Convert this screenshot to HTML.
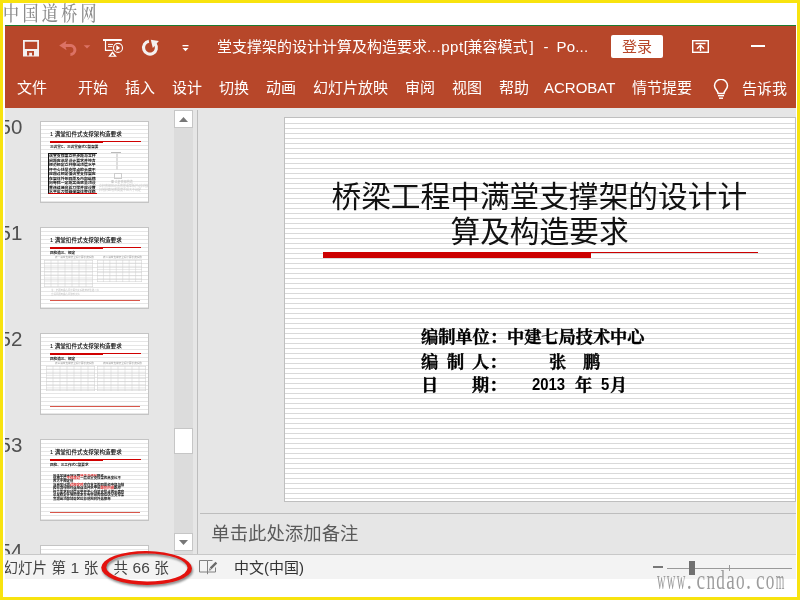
<!DOCTYPE html>
<html lang="zh-CN">
<head>
<meta charset="utf-8">
<title>桥梁工程中满堂支撑架的设计计算及构造要求</title>
<style>
html,body{margin:0;padding:0;}
body{width:800px;height:600px;overflow:hidden;background:#f8e30f;position:relative;
  font-family:"Liberation Sans","Noto Sans CJK SC",sans-serif;}
.abs{position:absolute;}
#white{left:3px;top:3px;width:794px;height:594px;background:#fff;}
#win{left:5px;top:25px;width:791px;height:554px;background:#e6e6e6;overflow:hidden;will-change:transform;}
#green{left:0;top:0;width:791px;height:1px;background:#1d7a2f;}
#red{left:0;top:1px;width:791px;height:82px;background:#b7472a;}
.t{position:absolute;white-space:nowrap;line-height:1;}
.tab{position:absolute;top:53px;font-size:15px;color:#fff;white-space:nowrap;line-height:20px;height:20px;}
#title{left:212px;top:12px;font-size:15px;line-height:20px;color:#fff;}
.tl{top:12px;font-size:15px;line-height:20px;color:#fff;}
#login{left:606px;top:10px;width:52px;height:23px;background:#fff;border-radius:2px;color:#b7472a;font-size:15px;line-height:23px;text-align:center;}
/* thumbnails */
.num{position:absolute;left:-5.500px;font-size:20.500px;color:#505050;line-height:20px;font-family:"Liberation Sans",sans-serif;font-weight:300;}
.th{position:absolute;left:35px;width:107px;height:80px;border:1px solid #c4c4c4;background:#fff;overflow:hidden;
  background-image:repeating-linear-gradient(to bottom,#fff 0,#fff 3px,#e6e6e6 3px,#e6e6e6 4px);}
.th .tt{position:absolute;left:9px;top:9px;font-size:5.6px;line-height:7px;color:#000;font-weight:500;white-space:nowrap;}
.th .rl{position:absolute;left:9px;top:19px;width:91px;height:1px;background:#d00000;}
.th .rl2{position:absolute;left:9px;top:19px;width:53px;height:1.800px;background:#d00000;}
.th .st{position:absolute;left:9px;top:23px;font-size:3.6px;line-height:5px;color:#222;font-weight:bold;white-space:nowrap;}
.th .bl{position:absolute;left:9px;top:72px;width:90px;height:1px;background:#d8564a;}
.sub{position:absolute;white-space:nowrap;font-family:"Liberation Serif","Noto Serif CJK SC",serif;font-weight:700;font-size:17.200px;line-height:20px;color:#000;-webkit-text-stroke:0.350px #000;}
.sub.lat{font-family:"Liberation Sans",sans-serif;font-weight:bold;font-size:16.200px;-webkit-text-stroke:0;transform:scaleX(0.920);transform-origin:0 0;margin-top:-1.700px;}
.sb{font-size:14.500px;line-height:20px;color:#444;word-spacing:0.500px}
.dg{font-size:15.500px;}
.tb{border:0.500px solid #ccc;box-sizing:border-box;background-image:repeating-linear-gradient(to bottom,transparent 0,transparent 2.500px,#d8d8d8 2.500px,#d8d8d8 3px),repeating-linear-gradient(to right,transparent 0,transparent 6.500px,#d8d8d8 6.500px,#d8d8d8 7px);}
</style>
</head>
<body>
<div id="white" class="abs"></div>
<div id="wm1" class="t" style="left:3px;top:3.500px;font-family:'Liberation Serif','Noto Serif CJK SC',serif;font-weight:500;font-size:16px;line-height:22px;color:#8c8c8c;letter-spacing:3.400px;transform:scaleY(1.300);transform-origin:0 60%;will-change:transform;">中国道桥网</div>

<div id="win" class="abs">
  <div id="green" class="abs"></div>
  <div id="red" class="abs"></div>

  <!-- quick access toolbar -->
  <svg class="abs" style="left:18px;top:14.500px" width="16" height="17" viewBox="0 0 16 17">
    <path d="M0 0H16V16.500H0Z M1.800 1.800V9H14.200V1.800Z" fill="#f4f1f0" fill-rule="evenodd"/>
    <path d="M4 11H11V15.400H9V12.800H6.200V15.400H4Z" fill="#b7472a"/>
  </svg>
  <svg class="abs" style="left:54px;top:15px" width="32" height="17" viewBox="0 0 32 17">
    <path d="M0.200 5.500 L7.600 0.800 L6.600 4 H12 V7 H6.600 L7.600 10.200Z" fill="#dc7265"/>
    <path d="M11.500 5.500 H12 A4.500 4.500 0 0 1 11.400 14.460" fill="none" stroke="#dc7265" stroke-width="3"/>
    <path d="M24.700 5.300 H31.300 L28 8.500Z" fill="#dc7265"/>
  </svg>
  <svg class="abs" style="left:98px;top:14px" width="21" height="19" viewBox="0 0 21 19">
    <rect x="0" y="0" width="18.800" height="2" fill="#fff"/>
    <path d="M2.500 2 V11.400 H9.500" fill="none" stroke="#fff" stroke-width="1.200"/>
    <rect x="5" y="4.900" width="5" height="1" fill="#fff"/>
    <rect x="5" y="7.100" width="4.400" height="1" fill="#fff"/>
    <circle cx="15" cy="8.900" r="4.500" fill="#b7472a" stroke="#fff" stroke-width="1.100"/>
    <path d="M13.300 6 L17.100 8.900 L13.300 11.800Z" fill="#fff"/>
    <path d="M9.500 12.200 L5.200 17.800 H13.900Z M9.500 14.600 L7.900 16.700 H11.200Z" fill="#fff" fill-rule="evenodd"/>
  </svg>
  <svg class="abs" style="left:136px;top:14.300px" width="19" height="18" viewBox="0 0 19 18">
    <path d="M7.900 2.240 A6.450 6.450 0 1 0 14.200 4.800" fill="none" stroke="#f4f1f0" stroke-width="3.100"/>
    <path d="M9.800 0.800 L17.900 2 L11.800 9Z" fill="#f4f1f0"/>
  </svg>
  <svg class="abs" style="left:177px;top:19.600px" width="7" height="7" viewBox="0 0 7 7">
    <rect x="0.500" y="0" width="6" height="1.300" fill="#fff"/>
    <path d="M0.500 3 H6.500 L3.500 6.300Z" fill="#fff"/>
  </svg>

  <div id="title" class="t">堂支撑架的设计计算及构造要求</div>
  <div class="t tl" style="left:422px;letter-spacing:0.550px">...ppt[</div>
  <div class="t tl" style="left:462.500px">兼容模式</div>
  <div class="t tl" style="left:524.500px">]</div>
  <div class="t tl" style="left:538.500px">-</div>
  <div class="t tl" style="left:551.500px;letter-spacing:0.200px">Po...</div>
  <div id="login" class="abs">登录</div>
  <svg class="abs" style="left:687px;top:14.500px" width="17" height="13" viewBox="0 0 17 13">
    <rect x="0.700" y="0.700" width="15.600" height="11.600" fill="none" stroke="#fff" stroke-width="1.400"/>
    <rect x="3.500" y="2.800" width="10" height="1.400" fill="#fff"/>
    <path d="M8.500 5.500 V11 M5 8.800 L8.500 5.300 L12 8.800" fill="none" stroke="#fff" stroke-width="1.400"/>
  </svg>
  <div class="abs" style="left:746px;top:20.400px;width:13.500px;height:1.500px;background:#fff"></div>

  <!-- ribbon tabs -->
  <div class="tab" style="left:12px">文件</div>
  <div class="tab" style="left:73px">开始</div>
  <div class="tab" style="left:120px">插入</div>
  <div class="tab" style="left:167px">设计</div>
  <div class="tab" style="left:214px">切换</div>
  <div class="tab" style="left:261px">动画</div>
  <div class="tab" style="left:308px">幻灯片放映</div>
  <div class="tab" style="left:400px">审阅</div>
  <div class="tab" style="left:447px">视图</div>
  <div class="tab" style="left:494px">帮助</div>
  <div class="tab" style="left:539px">ACROBAT</div>
  <div class="tab" style="left:627px">情节提要</div>
  <svg class="abs" style="left:707.500px;top:54px" width="16" height="21" viewBox="0 0 16 21">
    <path d="M5 14.500 C5 11.500 1.500 10.500 1.500 6.800 A6.300 6.300 0 0 1 14.500 6.800 C14.500 10.500 11 11.500 11 14.500 Z" fill="none" stroke="#fff" stroke-width="1.500"/>
    <rect x="5" y="16" width="6" height="1.400" fill="#fff"/>
    <rect x="6" y="18.500" width="4" height="1.400" fill="#fff"/>
  </svg>
  <div class="tab" style="left:737px;top:54px">告诉我</div>

  <!-- thumbnail pane -->
  <div id="pane" class="abs" style="left:0;top:83px;width:192px;height:446px;overflow:hidden;">
    <div class="num" style="top:9px">50</div>
    <div class="num" style="top:115px">51</div>
    <div class="num" style="top:221px">52</div>
    <div class="num" style="top:327px">53</div>
    <div class="num" style="top:433px">54</div>

    <div class="th" style="top:13px">
      <div class="tt">1 满堂扣件式支撑架构造要求</div><div class="rl"></div><div class="rl2"></div>
      <div class="st">三满堂C、三满堂盘式C型架要</div>
      <div class="abs" style="left:7px;top:31px;width:49px;height:41px;border-left:1px solid #111;border-top:1px solid #111;border-bottom:1px solid #d00000;box-sizing:border-box;overflow:hidden;font-size:3.9px;line-height:4.5px;font-weight:bold;color:#111;word-break:break-all;">满堂支撑架立杆步距与立杆间距应满足设计要求并符合规范规定立杆伸出顶层水平杆中心线至支撑点的长度不应超过规定值满堂支撑架应在架体外侧四周及内部纵横向每隔一定距离由底至顶设置连续竖向剪刀撑并应设置水平剪刀撑确保架体整体稳定</div>
      <div class="abs" style="left:70px;top:30px;width:10px;height:1px;background:#bbb"></div>
      <div class="abs" style="left:74.500px;top:31px;width:2px;height:17px;background:#dedede"></div>
      <div class="abs" style="left:73px;top:51px;width:8px;height:6px;border:1px solid #ccc;box-sizing:border-box"></div>
      <div class="t" style="left:70px;top:59px;font-size:3px;color:#bbb">图 立杆底部构造</div>
      <div class="t" style="left:58px;top:63px;font-size:3px;color:#c4c4c4">立杆底部应设置底座或垫板并设扫地杆</div>
      <div class="t" style="left:58px;top:67px;font-size:3px;color:#c4c4c4">扫地杆距地面高度不应大于规定</div>
    </div>

    <div class="th" style="top:119px">
      <div class="tt">1 满堂扣件式支撑架构造要求</div><div class="rl"></div><div class="rl2"></div>
      <div class="st">四构造三、规定</div>
      <div class="t" style="left:14px;top:29px;font-size:2.600px;color:#999">表一满堂支撑架立杆计算长度系数</div>
      <div class="t" style="left:62px;top:29px;font-size:2.600px;color:#999">表二满堂支撑架立杆计算长度系数</div>
      <svg class="abs" style="left:3px;top:32px" width="49" height="27" viewBox="0 0 49 27"><g stroke="#cfcfcf" stroke-width="0.5" fill="none"><rect x="0.25" y="0.25" width="48.5" height="26.5"/><path d="M0 3.0H49M0 6.0H49M0 9.0H49M0 12.0H49M0 15.0H49M0 18.0H49M0 21.0H49M0 24.0H49M7.0 0V27M14.0 0V27M21.0 0V27M28.0 0V27M35.0 0V27M42.0 0V27"/></g></svg>
      <svg class="abs" style="left:56px;top:32px" width="45" height="22" viewBox="0 0 45 22"><g stroke="#cfcfcf" stroke-width="0.5" fill="none"><rect x="0.25" y="0.25" width="44.5" height="21.5"/><path d="M0 3.14H45M0 6.29H45M0 9.43H45M0 12.57H45M0 15.71H45M0 18.86H45M6.43 0V22M12.86 0V22M19.29 0V22M25.71 0V22M32.14 0V22M38.57 0V22"/></g></svg>
      <div class="t" style="left:10px;top:62px;font-size:2.400px;color:#bbb">注：步距两级之间计算长度系数按线性插入值</div>
      <div class="t" style="left:10px;top:66px;font-size:2.400px;color:#bbb">立杆间距两级之间取较大值</div>
      <div class="bl"></div>
    </div>

    <div class="th" style="top:225px">
      <div class="tt">1 满堂扣件式支撑架构造要求</div><div class="rl"></div><div class="rl2"></div>
      <div class="st">四构造三、规定</div>
      <div class="t" style="left:14px;top:29px;font-size:2.600px;color:#999">表三满堂支撑架立杆计算长度系数</div>
      <div class="t" style="left:62px;top:29px;font-size:2.600px;color:#999">表四满堂支撑架立杆计算长度系数</div>
      <svg class="abs" style="left:5px;top:32px" width="49" height="25" viewBox="0 0 49 25"><g stroke="#cfcfcf" stroke-width="0.5" fill="none"><rect x="0.25" y="0.25" width="48.5" height="24.5"/><path d="M0 3.12H49M0 6.25H49M0 9.38H49M0 12.5H49M0 15.62H49M0 18.75H49M0 21.88H49M7.0 0V25M14.0 0V25M21.0 0V25M28.0 0V25M35.0 0V25M42.0 0V25"/></g></svg>
      <svg class="abs" style="left:56px;top:32px" width="49" height="25" viewBox="0 0 49 25"><g stroke="#cfcfcf" stroke-width="0.5" fill="none"><rect x="0.25" y="0.25" width="48.5" height="24.5"/><path d="M0 3.12H49M0 6.25H49M0 9.38H49M0 12.5H49M0 15.62H49M0 18.75H49M0 21.88H49M7.0 0V25M14.0 0V25M21.0 0V25M28.0 0V25M35.0 0V25M42.0 0V25"/></g></svg>
      <div class="bl"></div>
    </div>

    <div class="th" style="top:331px">
      <div class="tt">1 满堂扣件式支撑架构造要求</div><div class="rl"></div><div class="rl2"></div>
      <div class="st">四构、三工作式C型要求</div>
      <div class="abs" style="left:12px;top:33.500px;width:80px;height:29px;overflow:hidden;font-size:3.400px;line-height:3.450px;font-weight:bold;color:#111;white-space:nowrap;">满堂支撑架搭设高<span style="color:#d22">度不宜超过</span>规定<br>值施工层<span style="color:#d22">不得超过</span>一层满堂支撑架的高宽比不<br>应大于规定值<br>当高宽比超<span style="color:#d22">过规定时</span>应在支架的四周和中部与结<br>构柱进行刚性连接连墙件水平间<span style="color:#d22">距竖向间</span>距应<br>符合要求自顶层水平杆中心线至支撑点的长度应<br>满足稳定计算的要求在有空间的部位满堂支撑架<br>宜超出顶部加载区投影范围向外延伸布</div>
      <div class="bl"></div>
    </div>

    <div class="th" style="top:437px"></div>
  </div>

  <!-- scrollbar -->
  <div class="abs" style="left:169px;top:85px;width:19px;height:444px;background:#dcdcdc"></div>
  <div class="abs" style="left:169px;top:85px;width:19px;height:18px;background:#fff;border:1px solid #c6c6c6;box-sizing:border-box"></div>
  <svg class="abs" style="left:174px;top:91.700px" width="9" height="5" viewBox="0 0 9 5"><path d="M0 5 L4.500 0 L9 5Z" fill="#777"/></svg>
  <div class="abs" style="left:169px;top:403px;width:19px;height:26px;background:#fff;border:1px solid #c6c6c6;box-sizing:border-box"></div>
  <div class="abs" style="left:169px;top:508px;width:19px;height:18px;background:#fff;border:1px solid #c6c6c6;box-sizing:border-box"></div>
  <svg class="abs" style="left:174px;top:515px" width="9" height="5" viewBox="0 0 9 5"><path d="M0 0 L4.500 5 L9 0Z" fill="#777"/></svg>

  <!-- pane divider -->
  <div class="abs" style="left:192px;top:85px;width:1px;height:444px;background:#bdbdbd"></div>

  <!-- slide -->
  <div id="slide" class="abs" style="left:279px;top:92px;width:512px;height:385px;background:#fff;border:1px solid #bfbfbf;box-sizing:border-box;overflow:hidden;
     background-image:repeating-linear-gradient(to bottom,#fff 0,#fff 4px,#d9d9d9 4px,#d9d9d9 5px);background-position:0 1px;">
    <div class="t" id="h1a" style="left:46.500px;top:60.500px;font-size:29.700px;line-height:36px;color:#111;">桥梁工程中满堂支撑架的设计计</div>
    <div class="t" id="h1b" style="left:165.500px;top:95.500px;font-size:29.700px;line-height:36px;color:#111;">算及构造要求</div>
    <div class="abs" style="left:38px;top:134px;width:268px;height:6px;background:#cc0000"></div>
    <div class="abs" style="left:306px;top:134px;width:167px;height:1px;background:#cc0000"></div>
    <div class="sub" style="left:136px;top:210px">编制单位：中建七局技术中心</div>
    <div class="sub" style="left:136px;top:234.500px">编</div>
    <div class="sub" style="left:162px;top:234.500px">制</div>
    <div class="sub" style="left:187px;top:234.500px">人：</div>
    <div class="sub" style="left:264px;top:234.500px">张</div>
    <div class="sub" style="left:298px;top:234.500px">鹏</div>
    <div class="sub" style="left:136px;top:258px">日</div>
    <div class="sub" style="left:187px;top:258px">期：</div>
    <div class="sub lat" style="left:247px;top:258px">2013</div>
    <div class="sub" style="left:290px;top:258px">年</div>
    <div class="sub lat" style="left:316px;top:258px">5</div>
    <div class="sub" style="left:325px;top:258px">月</div>
  </div>

  <!-- notes -->
  <div class="abs" style="left:195px;top:488px;width:600px;height:1px;background:#bdbdbd"></div>
  <div class="t" style="left:206.300px;top:499px;font-size:18.400px;line-height:20px;color:#5a5a5a">单击此处添加备注</div>

  <!-- status bar -->
  <div class="abs" style="left:0;top:529px;width:791px;height:1px;background:#c8c8c8"></div>
  <div class="abs" style="left:0;top:530px;width:791px;height:24px;background:#f3f3f3"></div>
  <div class="t sb" style="left:-1.500px;top:533px">幻灯片 第 <span class="dg">1</span> 张</div>
  <div class="t sb" style="left:108.500px;top:533px">共 <span class="dg">66</span> 张</div>
  <svg class="abs" style="left:194px;top:534px" width="20" height="16" viewBox="0 0 20 16">
    <path d="M0.500 1.500 H8.500 V13 H0.500Z M8.500 1.500 H13.500 M8.500 13 H16.500 V8.500 M8.500 13 V15.200" fill="none" stroke="#808080" stroke-width="1"/>
    <path d="M17.400 3.600 L11.600 9.400" fill="none" stroke="#6a6a6a" stroke-width="2.300"/>
    <path d="M9.800 11.800 L10.500 9 L12.600 11.100Z" fill="#8a8a8a"/>
  </svg>
  <div class="t sb" style="left:229px;top:533px;color:#333;font-size:15px">中文(中国)</div>
  <div class="abs" style="left:648px;top:541px;width:10px;height:2px;background:#777"></div>
  <div class="abs" style="left:662px;top:543px;width:125px;height:1px;background:#9a9a9a"></div>
  <div class="abs" style="left:724px;top:540px;width:1px;height:6px;background:#9a9a9a"></div>
  <div class="abs" style="left:684px;top:536px;width:6px;height:14px;background:#707070"></div>
</div>
<svg id="wm2" class="abs" style="left:650px;top:566px;will-change:transform" width="146" height="30" viewBox="0 0 146 30">
  <g transform="translate(6.300,23.300) scale(1,1.400)" font-family="'Liberation Serif',serif" font-size="20" fill="#9c9c9c"><text x="0.6" y="0" textLength="8.600" lengthAdjust="spacingAndGlyphs">w</text><text x="10.5" y="0" textLength="8.600" lengthAdjust="spacingAndGlyphs">w</text><text x="20.4" y="0" textLength="8.600" lengthAdjust="spacingAndGlyphs">w</text><text x="30.4" y="0">.</text><text x="40.2" y="0" textLength="8.600" lengthAdjust="spacingAndGlyphs">c</text><text x="50.1" y="0" textLength="8.600" lengthAdjust="spacingAndGlyphs">n</text><text x="60.0" y="0" textLength="8.600" lengthAdjust="spacingAndGlyphs">d</text><text x="69.9" y="0" textLength="8.600" lengthAdjust="spacingAndGlyphs">a</text><text x="79.8" y="0" textLength="8.600" lengthAdjust="spacingAndGlyphs">o</text><text x="89.8" y="0">.</text><text x="99.6" y="0" textLength="8.600" lengthAdjust="spacingAndGlyphs">c</text><text x="109.5" y="0" textLength="8.600" lengthAdjust="spacingAndGlyphs">o</text><text x="119.4" y="0" textLength="8.600" lengthAdjust="spacingAndGlyphs">m</text></g>
</svg>
<svg class="abs" style="left:95px;top:546px;filter:drop-shadow(1.500px 2px 1.200px rgba(60,60,60,0.600))" width="110" height="50" viewBox="95 546 110 50">
  <path transform="rotate(0.500 146.600 568)" fill="#e4120e" fill-rule="evenodd"
    d="M101.200 568 A45.400 16.900 0 1 0 192 568 A45.400 16.900 0 1 0 101.200 568Z M106.200 567.500 A40.700 14 0 1 1 187.600 567.500 A40.700 14 0 1 1 106.200 567.500Z"/>
</svg>
</body>
</html>
